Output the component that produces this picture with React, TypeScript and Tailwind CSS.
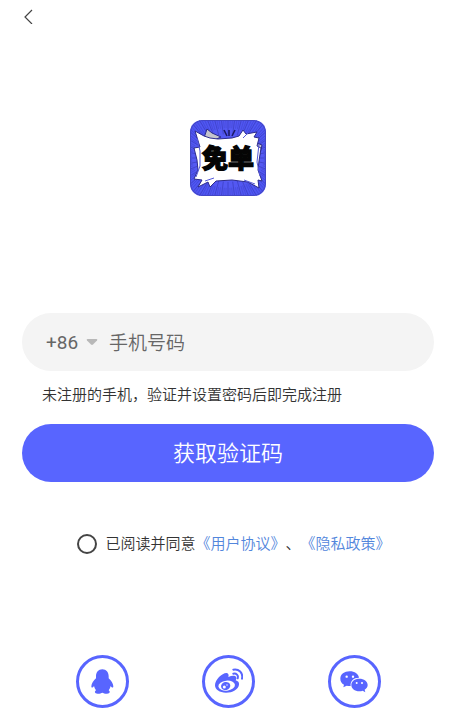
import React, { useState } from "react";

const RAY_COUNT = 120;

function AppLogo() {
  const rays = Array.from({ length: RAY_COUNT }, (_, i) => {
    const angle = (i / RAY_COUNT) * Math.PI * 2;
    const inner = i % 3 === 0 ? 30 : 36;
    return {
      x1: 38 + Math.cos(angle) * inner,
      y1: 38 + Math.sin(angle) * (inner - 6),
      x2: 38 + Math.cos(angle) * 58,
      y2: 38 + Math.sin(angle) * 58,
    };
  });

  return (
    <svg viewBox="0 0 76 76" className="size-[76px]" role="img" aria-label="免单">
      <defs>
        <clipPath id="logo-clip">
          <rect width="76" height="76" rx="12" />
        </clipPath>
      </defs>
      <g clipPath="url(#logo-clip)">
        <rect width="76" height="76" fill="#5459f2" />
        {rays.map((ray, i) => (
          <line key={i} {...ray} stroke="#3437ae" strokeWidth={i % 3 === 0 ? 0.9 : 0.5} opacity="0.6" />
        ))}
        <rect x="0.5" y="0.5" width="75" height="75" rx="12" fill="none" stroke="#4347c4" />
        <path
          d="M14 18 L17 9 L22 13 L31 17 L24 20 Z M64 22 L72 25 L70 34 L66 41 Z"
          fill="#c4c4cc"
          stroke="#2c2b8c"
          strokeWidth="1"
        />
        <path
          d="M5 11 L14 16 L20 18 L28 19 L42 18 L49 16 L53 10 L56 14 L67 12 L64 17 L69 18 L67 26 L71 28 L69 41 L68 50 L72 61 L68 60 L69 68 L58 62 L42 60 L26 61 L20 67 L18 62 L8 67 L12 60 L4 59 L8 50 L7 40 L4 28 L10 27 Z"
          fill="#fff"
          stroke="#2c2b8c"
          strokeWidth="1"
          strokeLinejoin="round"
        />
        <path
          d="M7 18 L10 31 L10 46 L6 57 M69 24 L67 42 L70 56 M15 61 L24 58 M54 60 L65 64 M58 13 L53 18"
          fill="none"
          stroke="#5559d8"
          strokeWidth="1"
        />
        <path d="M34 10 L37 16 M39 10 L39 16 M45 10 L42 16" stroke="#1c1a68" strokeWidth="1.6" />
        <text
          x="38"
          y="48"
          textAnchor="middle"
          fontSize="26"
          fontWeight="900"
          fill="#050505"
          stroke="#050505"
          strokeWidth="1.3"
          fontFamily="'Noto Sans CJK SC', sans-serif"
        >
          免单
        </text>
      </g>
    </svg>
  );
}

function QqIcon() {
  return (
    <svg viewBox="0 0 90 90" className="size-[30px]" fill="currentColor">
      <path d="M46 7 C34 7 27 16 27 28 L27 34 C20 41 13 50 13 58 C13 63 17 63 21 57 C22 62 24 66 27 70 C22 73 22 80 32 80 C39 80 43 78 46 77 C49 78 53 80 60 80 C70 80 70 73 65 70 C68 66 70 62 71 57 C75 63 79 63 79 58 C79 50 72 41 65 34 L65 28 C65 16 58 7 46 7 Z" />
    </svg>
  );
}

function WeiboIcon() {
  return (
    <svg viewBox="0 0 90 90" className="size-[30px]" fill="currentColor">
      <path d="M6 55 C6 38 28 17 41 18 C47 19 48 25 46 30 C56 26 66 25 69 30 C71 33 70 37 68 40 C75 42 79 46 78 53 C76 67 59 77 39 77 C20 77 6 68 6 55 Z" />
      <ellipse cx="41" cy="56" rx="25" ry="15" transform="rotate(-6 41 56)" fill="#fff" />
      <ellipse cx="38" cy="57" rx="14" ry="12" transform="rotate(-12 38 57)" />
      <circle cx="34" cy="60" r="4.5" fill="#fff" />
      <circle cx="42" cy="54" r="2" fill="#fff" />
      <path
        d="M61 8 C77 5 91 17 87 35 M61 20 C70 18 77 25 74 34"
        fill="none"
        stroke="currentColor"
        strokeWidth="6"
        strokeLinecap="round"
      />
    </svg>
  );
}

function WechatIcon() {
  return (
    <svg viewBox="0 0 90 90" className="size-[30px]" fill="currentColor">
      <path d="M32 13 C16 13 4 22 4 35 C4 43 8 49 15 53 L13 61 L23 56 C26 57 30 57 35 57 C33 42 44 32 60 32 C58 21 47 13 32 13 Z" />
      <path d="M61 35 C47 35 37 43 37 54 C37 65 47 73 61 73 C65 73 68 72 71 71 L79 76 L77 68 C82 65 86 60 86 54 C86 43 75 35 61 35 Z" />
      <g fill="#fff">
        <circle cx="23" cy="29" r="3.5" />
        <circle cx="42" cy="29" r="3.5" />
        <circle cx="53" cy="48" r="3" />
        <circle cx="69" cy="48" r="3" />
      </g>
    </svg>
  );
}

const socials = [
  { name: "QQ", icon: <QqIcon /> },
  { name: "微博", icon: <WeiboIcon /> },
  { name: "微信", icon: <WechatIcon /> },
];

export default function App() {
  const [areaCode, setAreaCode] = useState("+86");
  const [phone, setPhone] = useState("");
  const [agreed, setAgreed] = useState(false);

  const onSubmit = (e: React.FormEvent) => {
    e.preventDefault();
  };

  return (
    <div className="min-h-screen bg-white pr-[17px] pl-[22px] font-[Roboto,'Noto_Sans_CJK_SC',sans-serif] text-[#333]">
      <header className="flex h-8 items-center">
        <button type="button" aria-label="返回">
          <svg viewBox="0 0 12 16" className="h-4 w-3" fill="none" stroke="#444" strokeWidth="1.2">
            <path d="M10 2 L3 9 L10 16" />
          </svg>
        </button>
      </header>

      <main>
        <div className="mt-[88px] flex justify-center">
          <AppLogo />
        </div>

        <form onSubmit={onSubmit} className="mt-[117px]">
          <div className="flex h-[58px] items-center rounded-full bg-[#f4f4f4] px-6 text-[19px] text-[#666]">
            <div className="relative flex shrink-0 items-center">
              <select
                aria-label="国家代码"
                value={areaCode}
                onChange={(e) => setAreaCode(e.target.value)}
                className="w-[52px] appearance-none bg-transparent pt-0.5 focus:outline-none"
              >
                <option>+86</option>
              </select>
              <svg viewBox="0 0 12 8" className="pointer-events-none absolute right-0 h-2 w-3" fill="#b8b8b8">
                <path d="M1.5 1 H10.5 Q12 1.4 11 2.6 L7 6.6 Q6 7.4 5 6.6 L1 2.6 Q0 1.4 1.5 1 Z" />
              </svg>
            </div>
            <input
              type="tel"
              aria-label="手机号码"
              placeholder="手机号码"
              value={phone}
              onChange={(e) => setPhone(e.target.value)}
              className="ml-[11px] h-full w-full min-w-0 bg-transparent pt-0.5 font-[350] placeholder:text-[#666] focus:outline-none"
            />
          </div>

          <p className="mt-3 px-5 text-[15px] leading-6 font-[350]">未注册的手机，验证并设置密码后即完成注册</p>

          <button
            type="submit"
            className="mt-[17px] h-[58px] w-full rounded-full bg-[#5865ff] text-[22px] font-[350] text-white"
          >
            获取验证码
          </button>

          <div className="mt-[50px] flex items-center justify-center pl-3 text-[15px] leading-6 font-[350]">
            <input
              id="agree"
              type="checkbox"
              checked={agreed}
              onChange={(e) => setAgreed(e.target.checked)}
              className="mr-2 size-5 shrink-0 appearance-none rounded-full border-2 border-[#444] checked:bg-[#5865ff]"
            />
            <label htmlFor="agree">已阅读并同意</label>
            <a href="#terms" className="text-[#5286dc]">《用户协议》</a>
            <span>、</span>
            <a href="#privacy" className="text-[#5286dc]">《隐私政策》</a>
          </div>
        </form>
      </main>

      <footer className="mt-[99px] flex justify-center gap-[73px] pb-3">
        {socials.map((item) => (
          <button
            key={item.name}
            type="button"
            aria-label={item.name}
            className="flex size-[53px] items-center justify-center rounded-full border-3 border-[#5865ff] text-[#5865ff]"
          >
            {item.icon}
          </button>
        ))}
      </footer>
    </div>
  );
}
